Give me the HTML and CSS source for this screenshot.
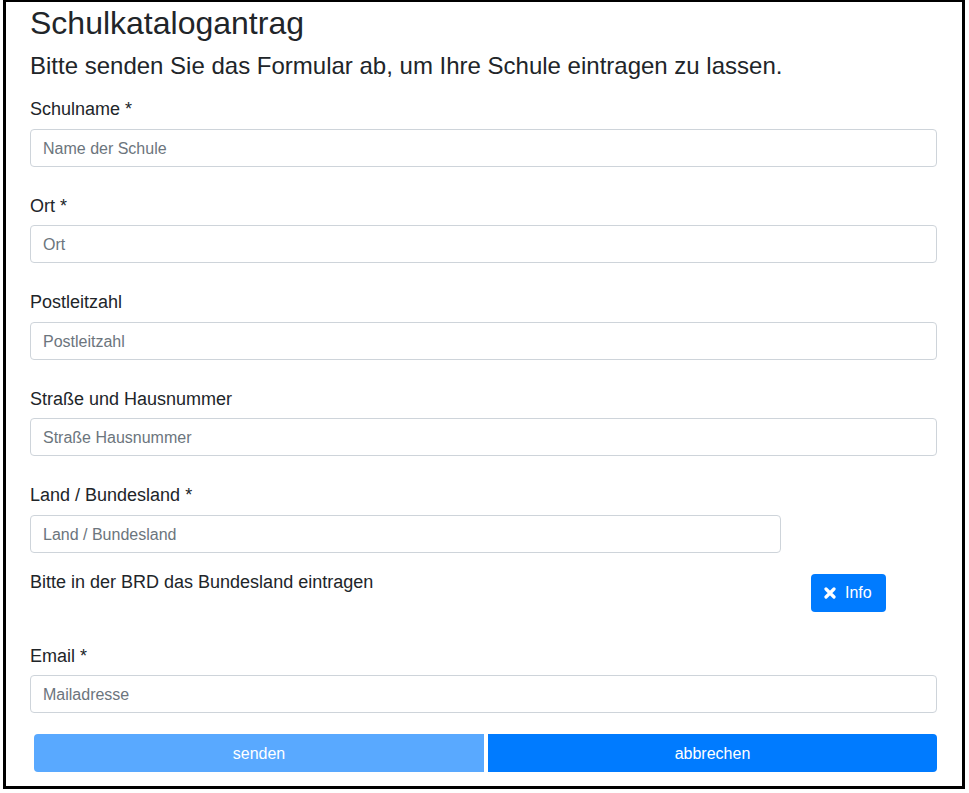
FILE: index.html
```html
<!DOCTYPE html>
<html lang="de">
<head>
<meta charset="utf-8">
<title>Schulkatalogantrag</title>
<link rel="stylesheet" href="styles.css">
</head>
<body>
<div class="frame">
  <h2 class="title">Schulkatalogantrag</h2>
  <h4 class="subtitle">Bitte senden Sie das Formular ab, um Ihre Schule eintragen zu lassen.</h4>
  <form class="form">
    <div class="group">
      <label class="label">Schulname *</label>
      <input class="input" type="text" placeholder="Name der Schule">
    </div>
    <div class="group">
      <label class="label">Ort *</label>
      <input class="input" type="text" placeholder="Ort">
    </div>
    <div class="group">
      <label class="label">Postleitzahl</label>
      <input class="input" type="text" placeholder="Postleitzahl">
    </div>
    <div class="group">
      <label class="label">Straße und Hausnummer</label>
      <input class="input" type="text" placeholder="Straße Hausnummer">
    </div>
    <div class="group group-land">
      <label class="label">Land / Bundesland *</label>
      <input class="input input-narrow" type="text" placeholder="Land / Bundesland">
    </div>
    <div class="hint-row">
      <div class="hint">Bitte in der BRD das Bundesland eintragen</div>
      <button type="button" class="btn btn-info-toggle">
        <svg class="icon" width="12" height="12" viewBox="0 0 12 12" aria-hidden="true">
          <path d="M2 2 L10 10 M10 2 L2 10" stroke="#fff" stroke-width="3.2" stroke-linecap="round" fill="none"/>
        </svg>
        <span>Info</span>
      </button>
    </div>
    <div class="group">
      <label class="label">Email *</label>
      <input class="input" type="email" placeholder="Mailadresse">
    </div>
    <div class="actions">
      <button type="button" class="btn btn-send">senden</button>
      <button type="button" class="btn btn-cancel">abbrechen</button>
    </div>
  </form>
</div>
</body>
</html>
```

FILE: styles.css
```css
html, body {
  margin: 0;
  padding: 0;
  background: #fff;
}

body {
  font-family: "Liberation Sans", Arial, sans-serif;
  color: #212529;
}

.frame {
  box-sizing: border-box;
  margin-left: 3px;
  width: 962px;
  height: 789px;
  border: 3px solid #000;
  border-top-width: 2px;
  padding: 2px 25px 0 24px;
}

.title {
  margin: 0;
  font-size: 32px;
  font-weight: 500;
  line-height: 38px;
}

.subtitle {
  margin: 9px 0 0 0;
  font-size: 24px;
  font-weight: 500;
  line-height: 29px;
}

.form {
  margin-top: 14px;
}

.group {
  display: flex;
  flex-direction: column;
  margin-bottom: 24px;
}

.group-land {
  margin-bottom: 16px;
}

.label {
  font-size: 18px;
  line-height: 26.5px;
  padding-top: 2px;
  margin-bottom: 6px;
}

.input {
  box-sizing: border-box;
  height: 38px;
  width: 100%;
  padding: 7px 12px 5px;
  border: 1px solid #ced4da;
  border-radius: 4px;
  font-family: "Liberation Sans", Arial, sans-serif;
  font-size: 16px;
  color: #495057;
  background: #fff;
}

.input::placeholder {
  color: #6c757d;
  opacity: 1;
}

.input-narrow {
  width: 751px;
}

.hint-row {
  display: flex;
  align-items: flex-start;
  margin-bottom: 29px;
}

.hint {
  width: 781px;
  font-size: 18px;
  line-height: 26.5px;
}

.btn {
  font-family: "Liberation Sans", Arial, sans-serif;
  font-size: 16px;
  color: #fff;
  border: 0;
  height: 38px;
  cursor: pointer;
  padding-top: 2px;
}

.btn-info-toggle {
  margin-top: 5px;
  width: 75px;
  background: #007bff;
  border-radius: 4px;
  display: flex;
  align-items: center;
  padding: 0 0 0 13px;
  gap: 9px;
}

.icon {
  display: block;
}

.actions {
  display: flex;
  gap: 4px;
  margin-top: -3px;
  padding-left: 4px;
}

.btn-send {
  flex: 450 0 0;
  background: #59a9ff;
  border-radius: 4px 0 0 4px;
}

.btn-cancel {
  flex: 449 0 0;
  background: #007bff;
  border-radius: 0 4px 4px 0;
}
```
